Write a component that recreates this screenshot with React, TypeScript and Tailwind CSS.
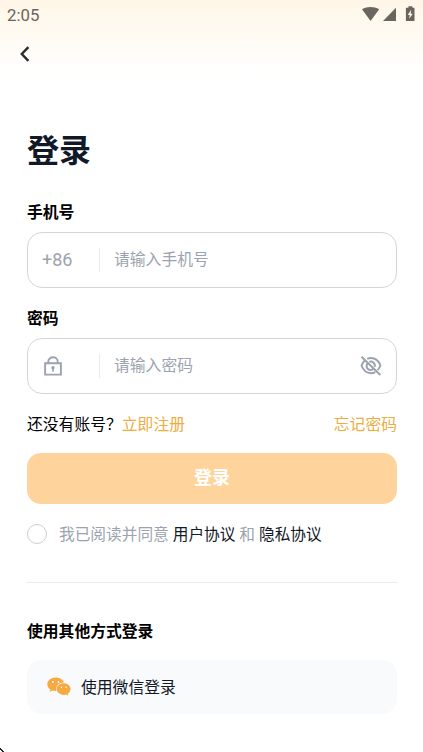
import React, { useState } from 'react';

const StatusBar: React.FC = () => (
  <div className="flex h-7 items-center justify-between pl-[7px] pr-2 font-['Roboto'] text-[#6a655d]">
    <span className="pt-[2px] text-[16.8px] leading-none">2:05</span>
    <svg width="53" height="16" viewBox="0 0 53 16" fill="#69655f">
      <path d="M0 3.2C5 0.4 12 0.4 17.2 3.2L8.6 15Z" />
      <path d="M34 1.7V15H21Z" />
      <path d="M46.4 0.2h4v1.5h2.1V15h-8.6V1.7h2.5z" />
      <path d="M49.2 3.8 45.7 9h2.1L47.1 12.8l3.7-5h-2.1z" fill="#fff8eb" />
    </svg>
  </div>
);

const BackIcon: React.FC = () => (
  <svg width="10" height="16" viewBox="0 0 10 16" fill="none" stroke="#2b2b2b" strokeWidth="2.4">
    <path d="M8.4 1.2 1.8 8l6.6 6.8" />
  </svg>
);

const LockIcon: React.FC = () => (
  <svg width="18" height="20" viewBox="0 0 18 20" fill="none" stroke="#9ca3af" strokeWidth="1.9">
    <path d="M1.1 7.3h15.8v11.3H1.1z" />
    <path d="M4.3 7V5.4a4.7 4.2 0 0 1 9.4 0V7" />
    <circle cx="9" cy="11.8" r="1.7" fill="#9ca3af" stroke="none" />
    <path d="M9 12v3.7" strokeWidth="1.6" />
  </svg>
);

const EyeOffIcon: React.FC = () => (
  <svg width="22" height="20" viewBox="0 0 22 20" fill="none" stroke="#9ca3af" strokeWidth="2">
    <path d="M7.2 2.9C8.3 2.4 9.6 2.1 11 2.1c4.2 0 7.5 2.6 9.4 7.4-.7 1.9-1.7 3.4-2.9 4.6" />
    <path d="M4.8 4.6C3.4 5.8 2.3 7.4 1.5 9.5c1.9 5 5.3 7.7 9.5 7.7 1.6 0 3-.4 4.3-1.1" />
    <path d="M7.7 7.2A4 4 0 1 0 13.6 12.6M9.3 5.9a4 4 0 0 1 5.3 5" />
    <path d="M1.5 0.8 20.3 19" />
  </svg>
);

const WechatIcon: React.FC = () => (
  <svg width="24" height="20" viewBox="0 0 24 20" fill="#f9a942">
    <path d="M8.7.4C4 .4.3 3.4.3 7.2c0 2.1 1.2 4 3.1 5.3l-.8 2.5 2.9-1.5c1 .3 2 .5 3.2.5h.7C8.2 9.3 11.7 5.3 17 5.5 16.2 2.5 12.8.4 8.7.4z" />
    <path d="M16.7 6.3c-3.900 0-7 2.600-7 5.800s3.100 5.800 7 5.800c.9 0 1.700-.1 2.500-.4l2.300 1.300-.7-2.100c1.700-1.100 2.800-2.700 2.800-4.600 0-3.200-3.100-5.800-6.900-5.800z" />
    <g fill="#fff">
      <circle cx="5.9" cy="5" r="0.9" />
      <circle cx="11.5" cy="5" r="0.9" />
      <circle cx="14.4" cy="10.3" r="0.8" />
      <circle cx="19" cy="10.3" r="0.8" />
    </g>
  </svg>
);

interface FieldProps {
  label: string;
  placeholder: string;
  type: string;
  prefix: React.ReactNode;
  suffix?: React.ReactNode;
}

const Field: React.FC<FieldProps> = ({ label, placeholder, type, prefix, suffix }) => (
  <div>
    <div className="h-5 font-bold leading-5 text-black">{label}</div>
    <div className="mt-[9px] flex h-14 items-center rounded-[15px] border-[1.5px] border-[#d3d5da] px-[14px]">
      <div className="flex w-[57px] shrink-0 items-center">{prefix}</div>
      <div className="h-6 w-px bg-[#e8e9ec]"></div>
      <input
        type={type}
        placeholder={placeholder}
        className="ml-[14px] h-8 min-w-0 flex-1 bg-transparent pb-0.5 outline-none placeholder:text-[#9ca3af]"
      />
      {suffix}
    </div>
  </div>
);

export default function App() {
  const [agreed, setAgreed] = useState(false);

  return (
    <div className="flex h-[752px] w-full flex-col overflow-hidden bg-white bg-linear-to-b from-[#fff6e7] to-white to-[72px] font-['Roboto','Noto_Sans_CJK_SC',sans-serif] text-[15.8px] text-[#111827]">
      <StatusBar />
      <header className="flex h-[51px] items-center pl-5">
        <BackIcon />
      </header>

      <main className="flex flex-1 flex-col pl-[27px] pr-[26px] pt-[47px]">
        <h1 className="h-[50px] text-[32px] font-bold leading-[50px]">登录</h1>

        <div className="mt-[27px] space-y-[21px]">
          <Field
            label="手机号"
            placeholder="请输入手机号"
            type="tel"
            prefix={<span className="pb-0.5 text-[18px] text-[#9ca3af]">+86</span>}
          />
          <Field
            label="密码"
            placeholder="请输入密码"
            type="password"
            prefix={<span className="pl-0.5"><LockIcon /></span>}
            suffix={<EyeOffIcon />}
          />
        </div>

        <div className="mt-[19px] flex h-6 items-center justify-between">
          <p className="text-black">
            还没有账号？<span className="text-[#edad42]">立即注册</span>
          </p>
          <span className="text-[#edad42]">忘记密码</span>
        </div>

        <button className="mt-4 h-[51px] shrink-0 rounded-[14px] bg-[#ffd49c] pb-0.5 text-[18px] font-bold text-white">
          登录
        </button>

        <div className="mt-[18px] flex h-6 items-center">
          <button
            onClick={() => setAgreed(!agreed)}
            className={`h-5 w-5 rounded-full border ${agreed ? 'border-[#f9a942] bg-[#f9a942]' : 'border-[#cfcfd1]'}`}
          />
          <p className="ml-3 whitespace-pre pt-0.5 text-[15.7px] text-[#9ca3af]">
            我已阅读并同意 <span className="text-[#111827]">用户协议</span> 和{' '}
            <span className="text-[#111827]">隐私协议</span>
          </p>
        </div>

        <div className="mt-9 h-px shrink-0 bg-[#ececee]"></div>

        <h2 className="mt-[37px] h-6 font-bold leading-6 text-black">使用其他方式登录</h2>
        <button className="mt-4 flex h-[54px] items-center rounded-[15px] bg-[#f9fafc] pl-5">
          <WechatIcon />
          <span className="ml-[10px] pt-px">使用微信登录</span>
        </button>
      </main>
      <svg className="absolute left-0 top-[748px]" width="4" height="4" fill="#222">
        <path d="M0 0h1v1h1v1h1v1h1v1H2V3H1V2H0z" />
      </svg>
    </div>
  );
}
